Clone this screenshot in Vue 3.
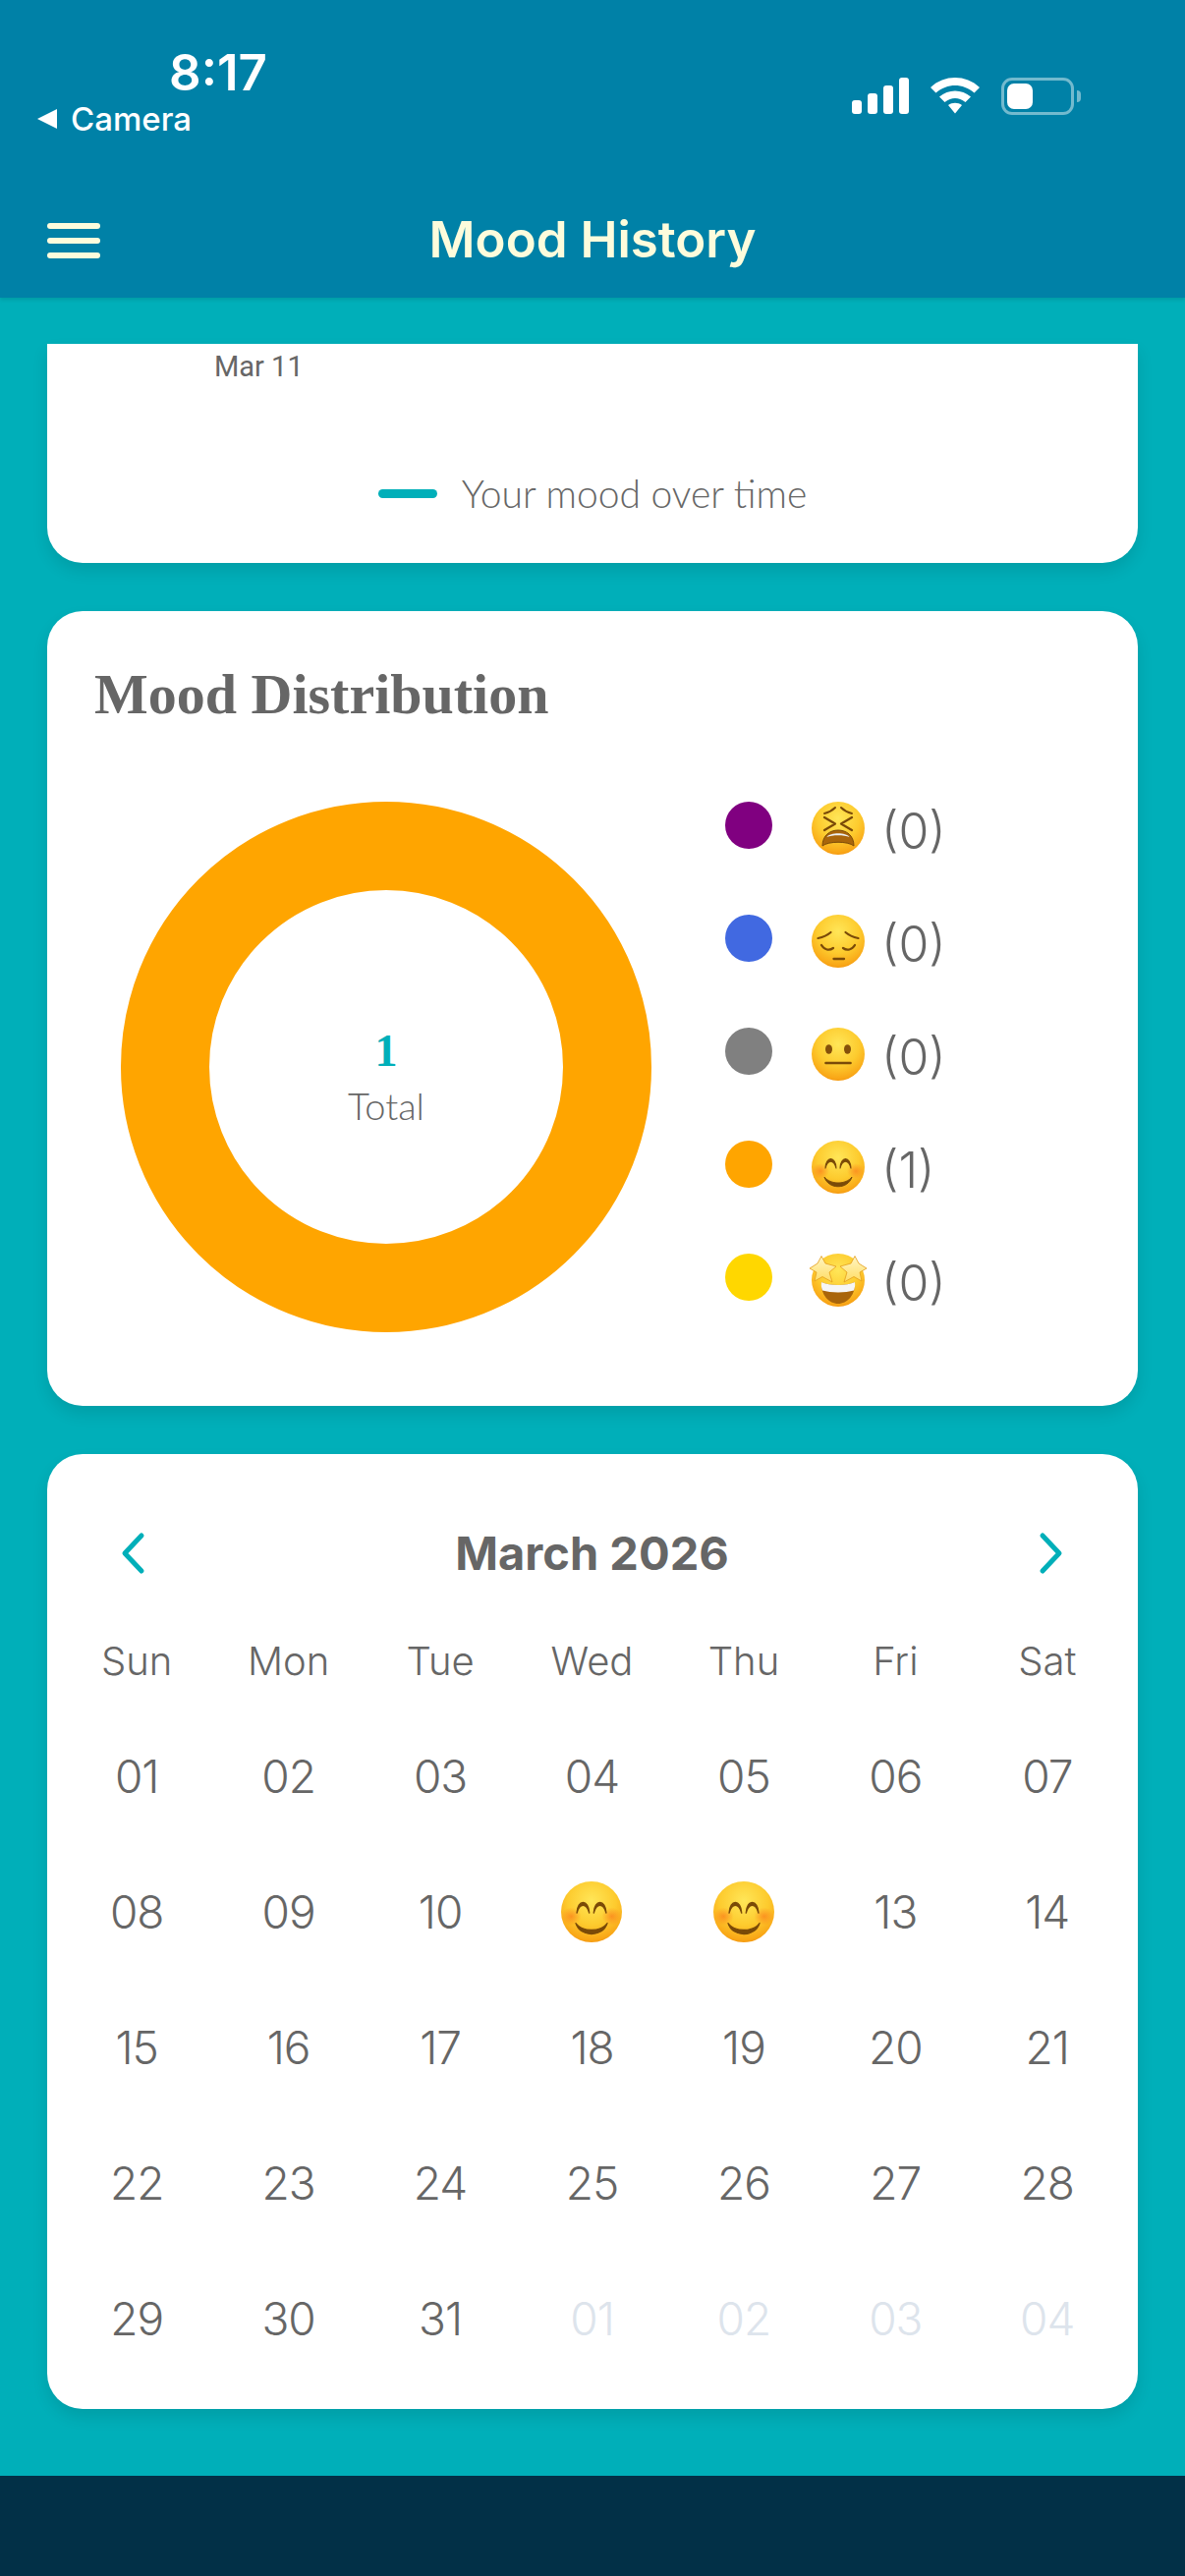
<script setup>
const weekDays = ['Sun', 'Mon', 'Tue', 'Wed', 'Thu', 'Fri', 'Sat']

const legend = [
  { color: '#800080', mood: 'tired', count: 0 },
  { color: '#4169e1', mood: 'sad', count: 0 },
  { color: '#808080', mood: 'neutral', count: 0 },
  { color: '#ffa500', mood: 'happy', count: 1 },
  { color: '#ffd700', mood: 'starry', count: 0 },
]

// March 2026 plus the trailing days of April
const days = []
for (let d = 1; d <= 31; d++) {
  days.push({ label: String(d).padStart(2, '0'), logged: d === 11 || d === 12, muted: false })
}
for (let d = 1; d <= 4; d++) {
  days.push({ label: String(d).padStart(2, '0'), logged: false, muted: true })
}
</script>

<template>
  <div class="screen">
    <svg width="0" height="0" class="defs">
      <defs>
        <radialGradient id="faceFill" cx="0.5" cy="0.32" r="0.72">
          <stop offset="0" stop-color="#ffe658" />
          <stop offset="0.55" stop-color="#fdcb2e" />
          <stop offset="0.88" stop-color="#f9a717" />
          <stop offset="1" stop-color="#f28f0a" />
        </radialGradient>
        <radialGradient id="blush" cx="0.5" cy="0.5" r="0.5">
          <stop offset="0" stop-color="#fb7d1c" stop-opacity="0.7" />
          <stop offset="1" stop-color="#fb7d1c" stop-opacity="0" />
        </radialGradient>
        <linearGradient id="starFill" x1="0" y1="0" x2="0" y2="1">
          <stop offset="0" stop-color="#fff6c4" />
          <stop offset="1" stop-color="#ffdc62" />
        </linearGradient>
        <g id="mood-tired">
          <circle cx="27" cy="27" r="27" fill="url(#faceFill)" />
          <path d="M13 12 C17 11 21 9 24 6 M41 12 C37 11 33 9 30 6" stroke="#7a4a08" stroke-width="2" stroke-linecap="round" fill="none" />
          <path d="M13 16 L24 22.500 L13 29 M41 16 L30 22.500 L41 29" stroke="#7a4a08" stroke-width="2.300" stroke-linecap="round" stroke-linejoin="round" fill="none" />
          <path d="M11 45 C11 34 19 29 27 29 C35 29 43 34 43 45 C37 40 17 40 11 45 Z" fill="#a9650b" stroke="#7a4a08" stroke-width="1" stroke-linejoin="round" />
          <path d="M15.500 36 C19 31 35 31 38.500 36 C33 33.500 21 33.500 15.500 36 Z" fill="#eceff2" />
        </g>
        <g id="mood-sad">
          <circle cx="27" cy="27" r="27" fill="url(#faceFill)" />
          <path d="M6.500 24 C11 23 16 21 19.500 18 M47.500 24 C43 23 38 21 34.500 18" stroke="#7a4a08" stroke-width="2.200" stroke-linecap="round" fill="none" />
          <path d="M10 31 C13 36 18 37 22 34 M44 31 C41 36 36 37 32 34" stroke="#7a4a08" stroke-width="2.300" stroke-linecap="round" fill="none" />
          <path d="M22.500 45 L33 45" stroke="#7a4a08" stroke-width="2.300" stroke-linecap="round" />
        </g>
        <g id="mood-neutral">
          <circle cx="27" cy="27" r="27" fill="url(#faceFill)" />
          <ellipse cx="17.500" cy="22" rx="3.500" ry="4.800" fill="#85500a" />
          <ellipse cx="36.500" cy="22" rx="3.500" ry="4.800" fill="#85500a" />
          <path d="M14.500 36 L39.500 36" stroke="#7a4a08" stroke-width="2.600" stroke-linecap="round" />
        </g>
        <g id="mood-happy">
          <circle cx="27" cy="27" r="27" fill="url(#faceFill)" />
          <ellipse cx="9" cy="31" rx="9" ry="8" fill="url(#blush)" />
          <ellipse cx="45" cy="31" rx="9" ry="8" fill="url(#blush)" />
          <path d="M14 28 C14.500 15.500 24.500 15.500 25 28 C22.500 19 16.500 19 14 28 Z M29 28 C29.500 15.500 39.500 15.500 40 28 C37.500 19 31.500 19 29 28 Z" fill="#7a4a08" stroke="#7a4a08" stroke-width="1.200" stroke-linejoin="round" />
          <path d="M13 37 C19 45 35 45 41 37 C37 50 17 50 13 37 Z" fill="#7a4a08" stroke="#7a4a08" stroke-width="1" stroke-linejoin="round" />
        </g>
        <g id="mood-starry">
          <circle cx="27" cy="27" r="27" fill="url(#faceFill)" />
          <path d="M10 29 C18 33 36 33 44 29 C45 42 36 51 27 51 C18 51 9 42 10 29 Z" fill="#a9650b" />
          <path d="M10 29 C18 33 36 33 44 29 C44.500 32 44 35 43 37.500 C34 40 20 40 11 37.500 C10 35 9.500 32 10 29 Z" fill="#f6f6f6" />
          <path d="M10 2.500 L14 10 L25 13 L18 19 L21 29 L11 23.500 L3 28 L5 19 L-2 15 L6 10 Z" fill="url(#starFill)" stroke="#e39d1a" stroke-width="0.800" stroke-linejoin="round" />
          <path d="M44 2.500 L40 10 L29 13 L36 19 L33 29 L43 23.500 L51 28 L49 19 L56 15 L48 10 Z" fill="url(#starFill)" stroke="#e39d1a" stroke-width="0.800" stroke-linejoin="round" />
        </g>
      </defs>
    </svg>

    <header class="top-bar">
      <div class="status-bar">
        <div class="status-left">
          <span class="clock">8:17</span>
          <span class="back-link"><i class="back-arrow"></i>Camera</span>
        </div>
        <div class="status-right">
          <svg width="58" height="37" viewBox="0 0 58 37" class="signal">
            <rect x="0" y="23" width="10" height="14" rx="3" />
            <rect x="16" y="16" width="10" height="21" rx="3" />
            <rect x="32" y="8" width="10" height="29" rx="3" />
            <rect x="48" y="0" width="10" height="37" rx="3" />
          </svg>
          <svg width="50" height="37" viewBox="0 0 50 37" class="wifi">
            <path d="M0 10 C14 -3.300 36 -3.300 50 10 L44.500 15.500 C33 5.500 17 5.500 5.500 15.500 Z" />
            <path d="M9 19.500 C18 11.500 32 11.500 41 19.500 L35.500 25 C28.500 19.500 21.500 19.500 14.500 25 Z" />
            <path d="M18 28 C22 25 28 25 32 28 L25 36.500 Z" />
          </svg>
          <span class="battery"><span class="battery-level"></span></span>
          <i class="battery-cap"></i>
        </div>
      </div>
      <div class="title-row">
        <button class="menu-button" aria-label="Menu"><span></span><span></span><span></span></button>
        <h1>Mood History</h1>
      </div>
    </header>

    <main class="content">
      <section class="card chart-tail">
        <span class="axis-label">Mar 11</span>
        <div class="chart-legend">
          <i class="legend-line"></i>
          <span>Your mood over time</span>
        </div>
      </section>

      <section class="card distribution">
        <h2>Mood Distribution</h2>
        <div class="distribution-body">
          <div class="donut">
            <svg width="540" height="540" viewBox="0 0 540 540">
              <circle cx="270" cy="270" r="225" fill="none" stroke="#ffa500" stroke-width="90" />
            </svg>
            <div class="donut-center">
              <strong>1</strong>
              <span>Total</span>
            </div>
          </div>
          <ul class="mood-legend">
            <li v-for="item in legend" :key="item.mood">
              <i class="dot" :style="{ background: item.color }"></i>
              <svg width="54" height="54" viewBox="0 0 54 54" class="emoji"><use :href="'#mood-' + item.mood" /></svg>
              <span class="count">({{ item.count }})</span>
            </li>
          </ul>
        </div>
      </section>

      <section class="card calendar">
        <div class="month-row">
          <svg width="26" height="42" viewBox="0 0 26 42" class="chevron"><path d="M22 3 L5 21 L22 39" /></svg>
          <h3>March 2026</h3>
          <svg width="26" height="42" viewBox="0 0 26 42" class="chevron"><path d="M4 3 L21 21 L4 39" /></svg>
        </div>
        <div class="week-row">
          <span v-for="name in weekDays" :key="name">{{ name }}</span>
        </div>
        <div class="day-grid">
          <div v-for="(day, i) in days" :key="i" class="day" :class="{ muted: day.muted }">
            <svg v-if="day.logged" width="62" height="62" viewBox="0 0 54 54"><use href="#mood-happy" /></svg>
            <template v-else>{{ day.label }}</template>
          </div>
        </div>
      </section>
    </main>

    <footer class="bottom-bar"></footer>
  </div>
</template>

<style>
html, body {
  margin: 0;
  background: #023047;
}
</style>

<style scoped>
.screen {
  width: 1206px;
  height: 2622px;
  display: flex;
  flex-direction: column;
  overflow: hidden;
  background: #00afb9;
  font-family: Inter, "Liberation Sans", sans-serif;
  color: #666;
}
.defs {
  position: absolute;
}
svg {
  overflow: visible;
}

/* header */
.top-bar {
  height: 303px;
  box-sizing: border-box;
  flex-shrink: 0;
  background: #0081a7;
  box-shadow: 0 2px 4px rgba(0, 0, 0, 0.12);
  color: #fff;
  position: relative;
}
.status-bar {
  height: 186px;
  display: flex;
  justify-content: space-between;
  box-sizing: border-box;
  padding: 48px 106px 0 38px;
}
.status-left {
  display: flex;
  flex-direction: column;
}
.clock {
  font-size: 51px;
  line-height: 52px;
  font-weight: 600;
  margin-left: 134px;
}
.back-link {
  display: flex;
  align-items: center;
  font-size: 33px;
  line-height: 38px;
  font-weight: 500;
  margin-top: 2px;
}
.back-arrow {
  width: 0;
  height: 0;
  border-top: 10px solid transparent;
  border-bottom: 10px solid transparent;
  border-right: 20px solid #fff;
  margin-right: 14px;
}
.status-right {
  display: flex;
  align-items: flex-start;
  padding-top: 31px;
  fill: #fff;
}
.signal {
  margin-right: 22px;
}
.wifi {
  margin-right: 22px;
}
.battery {
  width: 74px;
  height: 38px;
  box-sizing: border-box;
  border: 3px solid rgba(255, 255, 255, 0.45);
  border-radius: 11px;
  padding: 3px;
}
.battery-level {
  display: block;
  width: 26px;
  height: 26px;
  background: #fff;
  border-radius: 7px;
}
.battery-cap {
  width: 4px;
  height: 12px;
  margin: 13px 0 0 3px;
  background: rgba(255, 255, 255, 0.45);
  border-radius: 0 4px 4px 0;
}
.title-row {
  height: 117px;
  position: relative;
  display: flex;
  justify-content: center;
  padding-top: 29px;
  box-sizing: border-box;
}
.title-row h1 {
  margin: 0;
  font-size: 51px;
  line-height: 58px;
  font-weight: 600;
  color: #fdfcdc;
}
.menu-button {
  position: absolute;
  left: 48px;
  top: 41px;
  width: 54px;
  height: 36px;
  padding: 0;
  border: 0;
  background: none;
  display: flex;
  flex-direction: column;
  justify-content: space-between;
}
.menu-button span {
  display: block;
  height: 6px;
  border-radius: 3px;
  background: #fdfcdc;
}

/* page body */
.content {
  flex: 1;
  display: flex;
  flex-direction: column;
  gap: 49px;
  padding: 47px 48px 0;
}
.card {
  background: #fff;
  border-radius: 36px;
  box-shadow: 0 8px 16px rgba(0, 0, 0, 0.1);
}
.chart-tail {
  height: 223px;
  border-radius: 0 0 36px 36px;
  position: relative;
  box-sizing: border-box;
  padding-top: 6px;
}
.axis-label {
  display: block;
  margin-left: 170px;
  font-size: 29px;
  line-height: 34px;
  font-family: Roboto, Inter, sans-serif;
}
.chart-legend {
  display: flex;
  align-items: center;
  justify-content: center;
  gap: 25px;
  margin-top: 90px;
  font-size: 39px;
  line-height: 44px;
  font-weight: 300;
  font-family: Lato, sans-serif;
}
.legend-line {
  width: 60px;
  height: 9px;
  border-radius: 5px;
  background: #00afb9;
}

/* donut + legend */
.distribution {
  height: 809px;
  box-sizing: border-box;
  padding: 48px 48px 0;
}
.distribution h2 {
  margin: 0;
  font-family: "Liberation Serif", serif;
  font-size: 58px;
  line-height: 74px;
  font-weight: 700;
  color: #666;
}
.distribution-body {
  display: flex;
  margin-top: 72px;
}
.donut {
  width: 540px;
  height: 540px;
  position: relative;
  margin-left: 27px;
}
.donut svg {
  display: block;
}
.donut-center {
  position: absolute;
  inset: 0;
  display: flex;
  flex-direction: column;
  align-items: center;
  justify-content: center;
  padding-top: 18px;
  box-sizing: border-box;
}
.donut-center strong {
  font-family: "Liberation Serif", serif;
  font-size: 46px;
  line-height: 54px;
  color: #00afb9;
}
.donut-center span {
  font-family: Lato, sans-serif;
  font-weight: 300;
  font-size: 38px;
  line-height: 46px;
  margin-top: 5px;
}
.mood-legend {
  list-style: none;
  margin: 0 0 0 75px;
  padding: 0;
  display: flex;
  flex-direction: column;
  gap: 55px;
}
.mood-legend li {
  display: flex;
  align-items: flex-start;
  height: 60px;
}
.dot {
  width: 48px;
  height: 48px;
  border-radius: 50%;
  margin-right: 40px;
}
.emoji {
  margin-top: 0;
}
.count {
  margin: 0 0 0 17px;
  font-size: 50px;
  line-height: 60px;
  font-weight: 300;
}

/* month calendar */
.calendar {
  height: 972px;
  box-sizing: border-box;
  padding: 76px 15px 0 14px;
}
.month-row {
  display: flex;
  align-items: center;
  justify-content: space-between;
  padding: 0 60px;
  height: 50px;
}
.month-row h3 {
  margin: 0;
  font-size: 47px;
  line-height: 50px;
  font-weight: 700;
}
.chevron {
  fill: none;
  stroke: #00afb9;
  stroke-width: 5;
  stroke-linecap: round;
  stroke-linejoin: round;
}
.week-row,
.day-grid {
  display: grid;
  grid-template-columns: repeat(7, 1fr);
  text-align: center;
}
.week-row {
  margin-top: 60px;
  font-size: 40px;
  line-height: 50px;
  font-weight: 300;
}
.day-grid {
  margin-top: 23px;
  grid-auto-rows: 138px;
}
.day {
  display: flex;
  align-items: center;
  justify-content: center;
  font-size: 46px;
  letter-spacing: -1px;
  font-weight: 300;
  color: #666;
}
.day.muted {
  color: #dde4ec;
}

.bottom-bar {
  height: 102px;
  flex-shrink: 0;
  background: #023047;
}
</style>
